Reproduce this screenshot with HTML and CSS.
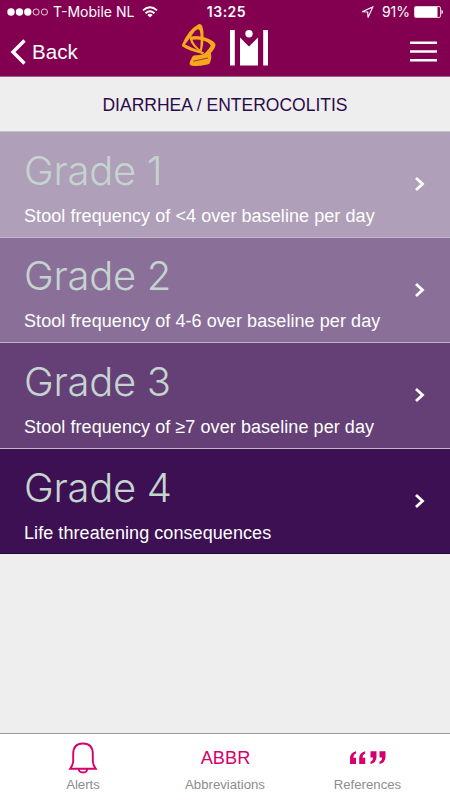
FILE: index.html
```html
<!DOCTYPE html>
<html lang="en">
<head>
<meta charset="utf-8">
<title>Diarrhea / Enterocolitis</title>
<link rel="stylesheet" href="styles.css">
</head>
<body>
<header class="top">
  <div class="status">
    <div class="carrier">
      <svg width="42" height="10" viewBox="0 0 42 10"><g fill="#fff"><circle cx="4" cy="5" r="3.7"/><circle cx="12.5" cy="5" r="3.7"/><circle cx="20.8" cy="5" r="3.7"/></g><g fill="none" stroke="#fff" stroke-width=".8"><circle cx="29.1" cy="5" r="3.1"/><circle cx="37.4" cy="5" r="3.1"/></g></svg>
      <span class="network">T-Mobile NL</span>
      <svg width="16" height="12" viewBox="0 0 16 12"><g fill="none" stroke="#fff" stroke-width="1.9"><path d="M1 4.4Q8-1.8 15 4.4"/><path d="M3.5 7.2Q8 3.2 12.5 7.2"/></g><path d="M5.4 9Q8 6.7 10.6 9L8 11.6z" fill="#fff"/></svg>
    </div>
    <span class="clock">13:25</span>
    <div class="power">
      <svg width="13" height="13" viewBox="0 0 13 13"><path d="M1.2 5.7L11.8.9 7 11.5 6.7 6z" fill="none" stroke="#fff" stroke-width="1.1"/></svg>
      <span class="percent">91%</span>
      <svg width="30" height="12" viewBox="0 0 30 12"><rect x=".5" y=".5" width="26" height="11" rx="1.5" fill="none" stroke="#fff" stroke-width=".8"/><path d="M1 1h22.500v10H1z" fill="#fff"/><path d="M27.500 3.500q3 2.500 0 5z" fill="#fff"/></svg>
    </div>
  </div>
  <nav class="bar">
    <a class="back"><svg width="16" height="26" viewBox="0 0 16 26"><path d="M14.500 1.500L3 13l11.500 11.500" fill="none" stroke="#fff" stroke-width="3.4"/></svg><span>Back</span></a>
    <svg class="logo" width="88" height="44" viewBox="0 0 88 44">
      <g fill="#f5a81c">
        <path d="M1 20.800Q7 6 17.500.3Q20.500-.8 21.500 3Q22.800 7 22.500 13.500Q22.500 21 20.800 27L18.800 26Q20 20 19.500 13Q19.500 5.500 17.300 5.200Q14 5.500 10.500 12L4 20.500Q10 23.500 23 28.300L22 30.200Q7 26.500 1.500 22.500Q.6 21.800 1 20.800z"/>
        <path d="M9.500 12.500Q20 11 28 15Q34 17.800 34.500 20.500Q34.600 23.500 30 29L30.300 33.500Q30 36.500 29 38.500Q28.500 40.500 25 40.800Q17 42.500 11 41.800Q7.500 41.200 9 37.500L11.500 32.500Q12.200 31.200 15 31.200Q21 31.500 24.500 28.500Q28 25 29.800 21.800Q28.500 18.500 22 16.500Q17 14.800 11.500 15.800Q12.500 20.500 21 27.500L19.500 28Q10 21.500 9 15.500Q8.700 13.500 9.500 12.500z"/>
      </g>
      <path d="M12.500 37.200L27 34" stroke="#830051" stroke-width=".7"/>
      <g fill="#fff"><path d="M49 6h4.8v35.500H49zM82.200 6H87v35.500h-4.800zM59 13.500l9 9 9-9v28H59z"/><circle cx="68" cy="9.700" r="3.700"/></g>
    </svg>
    <svg class="menu" width="27" height="22" viewBox="0 0 27 22"><path d="M0 1.8h27M0 10.500h27M0 19.200h27" stroke="#fff" stroke-width="2.400"/></svg>
  </nav>
</header>
<h1 class="title"><span>DIARRHEA / ENTEROCOLITIS</span></h1>
<main class="grades">
  <a class="grade g1"><div><h2>Grade 1</h2><p>Stool frequency of &lt;4 over baseline per day</p></div><svg class="chev" width="12" height="16" viewBox="0 0 12 16"><path d="M2 2l6.500 6L2 14"/></svg></a>
  <a class="grade g2"><div><h2>Grade 2</h2><p>Stool frequency of 4-6 over baseline per day</p></div><svg class="chev" width="12" height="16" viewBox="0 0 12 16"><path d="M2 2l6.500 6L2 14"/></svg></a>
  <a class="grade g3"><div><h2>Grade 3</h2><p>Stool frequency of ≥7 over baseline per day</p></div><svg class="chev" width="12" height="16" viewBox="0 0 12 16"><path d="M2 2l6.500 6L2 14"/></svg></a>
  <a class="grade g4"><div><h2>Grade 4</h2><p>Life threatening consequences</p></div><svg class="chev" width="12" height="16" viewBox="0 0 12 16"><path d="M2 2l6.500 6L2 14"/></svg></a>
</main>
<footer class="tabs">
  <a class="tab alerts"><span class="icon"><svg width="30" height="34" viewBox="0 0 30 34"><path d="M2.200 27.700h25.600Q24.800 23.500 24.800 20V12.500Q24.500 2.500 15 2.500T5.200 12.500V20Q5.200 23.500 2.200 27.700z M10.800 28Q11 31.500 15 31.500T19.200 28" fill="none" stroke="#d6006d" stroke-width="1.900"/></svg></span><span class="label">Alerts</span></a>
  <a class="tab"><span class="icon abbr">ABBR</span><span class="label">Abbreviations</span></a>
  <a class="tab"><span class="icon"><svg width="36" height="14" viewBox="0 0 36 14"><g fill="#d6006d"><path d="M6 .3V2.500Q3.300 3.500 3.500 6.700H6V13H0V7.500Q0 1.500 6 .3z"/><path d="M15.200.3V2.500Q12.500 3.500 12.700 6.700H15.200V13H9.200V7.500Q9.200 1.500 15.200.3z"/><path d="M20.500 13V10.800Q23.200 9.800 23 6.600H20.500V.3h6V5.800Q26.500 11.800 20.500 13z"/><path d="M29.500 13V10.800Q32.200 9.800 32 6.600H29.500V.3h6V5.800Q35.500 11.800 29.500 13z"/></g></svg></span><span class="label">References</span></a>
</footer>
</body>
</html>
```
FILE: styles.css
```css
* { box-sizing: border-box; }
body {
  margin: 0;
  width: 450px;
  height: 800px;
  display: flex;
  flex-direction: column;
  overflow: hidden;
  background: #eee;
  font-family: "Liberation Sans", Arial, sans-serif;
}
svg { display: block; flex: none; }
h1, h2, p { margin: 0; font-weight: 400; }
.top {
  height: 77px;
  background: #830051;
  border-bottom: 1px solid #9a6583;
  color: #fff;
}
.status {
  height: 24px;
  display: grid;
  grid-template-columns: 1fr auto 1fr;
  align-items: center;
  padding: 0 6px 0 7px;
  font: 14px/24px Inter, sans-serif;
}
.carrier, .power { display: flex; align-items: center; }
.network { margin: 0 8px 0 4px; white-space: nowrap; }
.clock { font-weight: 600; letter-spacing: .5px; margin-left: 2px; }
.power { justify-content: flex-end; }
.percent { margin: 0 4px 0 8px; }
.bar {
  height: 52px;
  display: grid;
  grid-template-columns: 1fr 88px 1fr;
  align-items: start;
  padding: 0 13px 0 11px;
}
.back { display: flex; align-items: center; gap: 5px; padding-top: 14px; margin-left: -1px; font-size: 20.500px; line-height: 26px; }
.back span { padding: 1px 0 0 1px; letter-spacing: .1px; }
.logo { margin-left: 1px; }
.menu { justify-self: end; margin-top: 17px; }
.title {
  height: 55px;
  display: flex;
  align-items: center;
  justify-content: center;
  padding-top: 2px;
  border-bottom: 1px solid #c7c7c7;
  color: #2b0b4b;
  font-size: 17.500px;
}
.grade {
  height: 105.600px;
  display: flex;
  align-items: center;
  justify-content: space-between;
  padding: 0 24px;
  border-bottom: 1px solid #c2b8c8;
  color: #fff;
}
.g1 { background: #b09fb9; }
.g2 { background: #8a7099; }
.g3 { background: #644076; }
.g4 { background: #3c1053; border-color: #20073c; }
.grade h2 {
  padding-top: 6px;
  font: 300 40px/48px Inter, sans-serif;
  letter-spacing: -.3px;
  color: #c4d4cf;
}
.grade p { margin-top: 9px; font-size: 18px; line-height: 24px; letter-spacing: .07px; }
.chev path { fill: none; stroke: #fff; stroke-width: 2.800; }
.tabs {
  height: 67px;
  margin-top: auto;
  display: grid;
  grid-template-columns: 142px 142px 143px;
  justify-content: center;
  border-top: 1px solid #999;
  background: #fff;
}
.tab { display: flex; flex-direction: column; align-items: center; }
.icon { height: 42px; padding: 6px 0 0 1px; display: flex; align-items: center; }
.abbr { padding-left: 2px; font-size: 18.200px; color: #d6006d; }
.label { padding-left: 1px; font-size: 13.200px; line-height: 18px; color: #8d8d8d; }
```
